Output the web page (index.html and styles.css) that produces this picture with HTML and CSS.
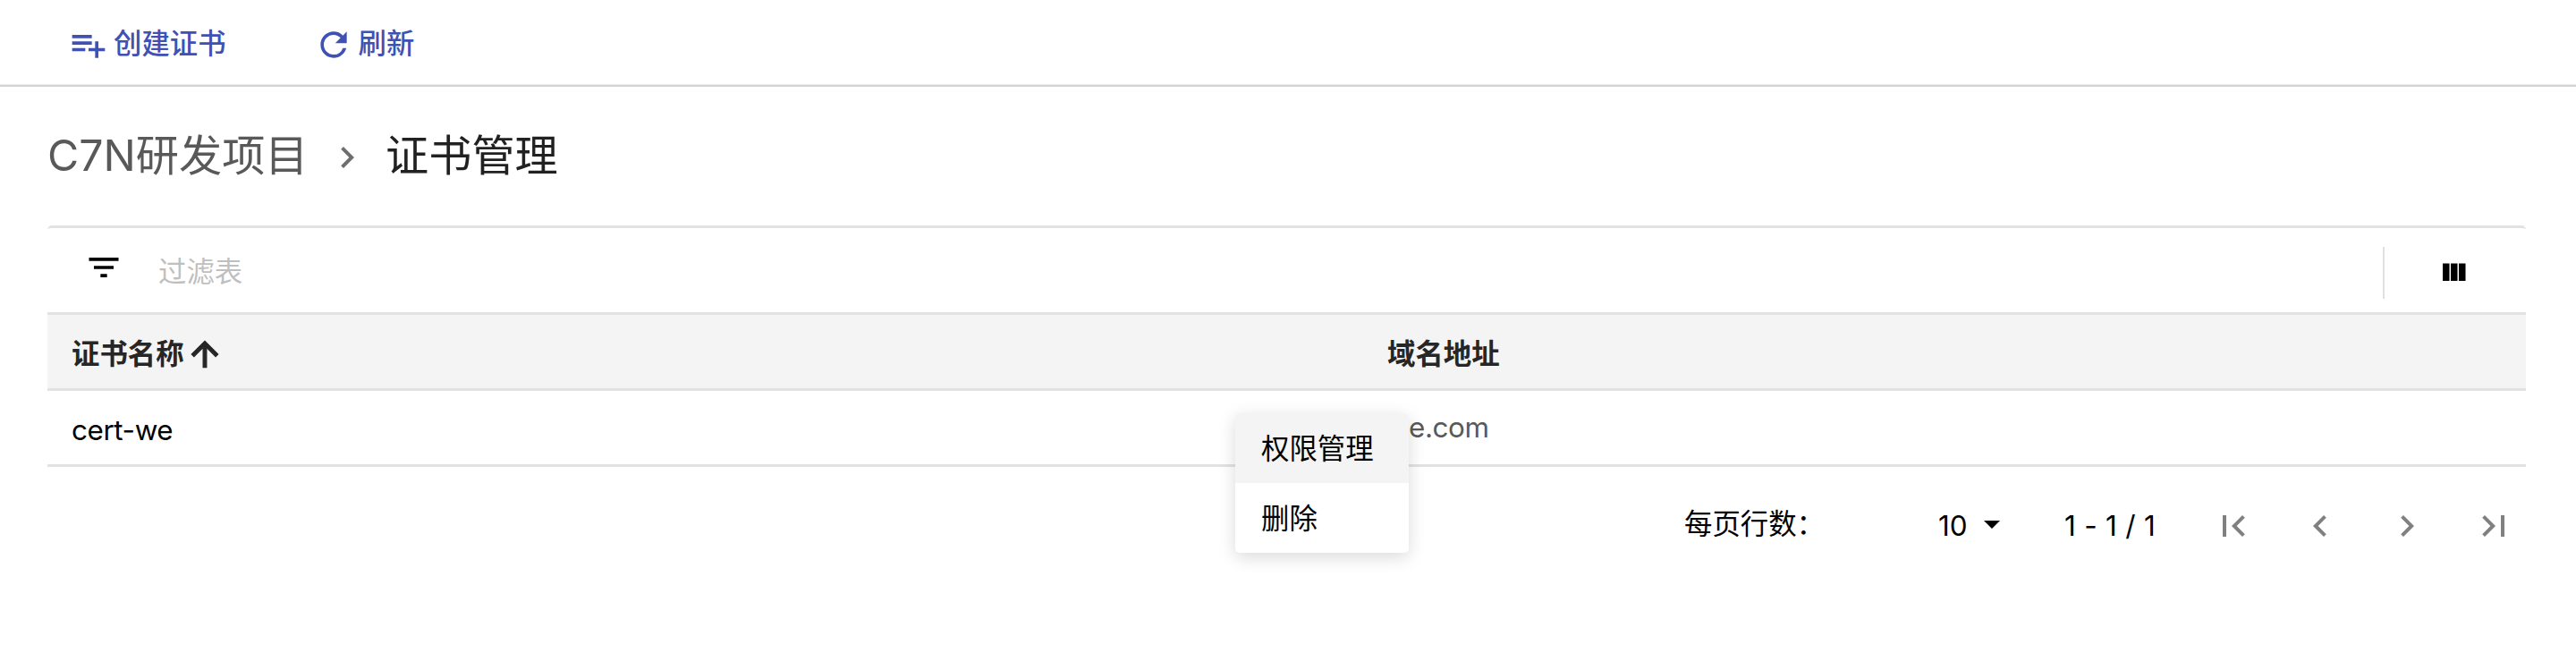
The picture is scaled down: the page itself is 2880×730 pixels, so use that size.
FILE: index.html
```html
<!DOCTYPE html>
<html lang="zh-CN">
<head>
<meta charset="utf-8">
<title>证书管理</title>
<link rel="stylesheet" href="styles.css">
</head>
<body>
<header class="toolbar">
  <button class="action">
    <svg class="icon" viewBox="0 0 24 24"><path d="M14 10H2v2h12v-2zm0-4H2v2h12V6zm4 8v-4h-2v4h-4v2h4v4h2v-4h4v-2h-4zM2 16h8v-2H2v2z"/></svg>
    <span class="action-label">创建证书</span>
  </button>
  <button class="action">
    <svg class="icon" viewBox="0 0 24 24"><path d="M17.65 6.35A7.958 7.958 0 0 0 12 4c-4.42 0-7.99 3.58-7.99 8s3.57 8 7.99 8c3.73 0 6.84-2.55 7.73-6h-2.08A5.99 5.99 0 0 1 12 18c-3.31 0-6-2.69-6-6s2.69-6 6-6c1.66 0 3.14.69 4.22 1.78L13 11h7V4l-2.35 2.35z"/></svg>
    <span class="action-label">刷新</span>
  </button>
</header>
<main class="content">
  <nav class="breadcrumb">
    <span class="crumb">C7N研发项目</span>
    <svg class="crumb-arrow" viewBox="0 0 24 24"><path d="M10 6L8.59 7.41 13.17 12l-4.58 4.59L10 18l6-6z"/></svg>
    <span class="crumb-current">证书管理</span>
  </nav>
  <section class="table">
    <div class="filter">
      <svg class="icon filter-icon" viewBox="0 0 24 24"><path d="M10 18h4v-2h-4v2zM3 6v2h18V6H3zm3 7h12v-2H6v2z"/></svg>
      <span class="placeholder">过滤表</span>
      <span class="columns"><svg class="columns-icon" viewBox="0 0 24 24"><path d="M10 18h5V5h-5v13zm-6 0h5V5H4v13zM16 5v13h5V5h-5z"/></svg></span>
    </div>
    <div class="row head">
      <div class="cell">证书名称<svg class="icon sort" viewBox="0 0 24 24"><path d="M4 12l1.41 1.41L11 7.83V20h2V7.83l5.58 5.59L20 12l-8-8-8 8z"/></svg></div>
      <div class="cell">域名地址</div>
    </div>
    <div class="row">
      <div class="cell name">cert-we</div>
      <div class="cell domain">e.com</div>
    </div>
    <ul class="menu">
      <li class="menu-item active">权限管理</li>
      <li class="menu-item">删除</li>
    </ul>
  </section>
  <footer class="pager">
    <span class="pager-label">每页行数：</span>
    <span class="page-size">10<i class="caret"></i></span>
    <span class="range">1 - 1 / 1</span>
    <div class="pager-nav">
      <svg viewBox="0 0 24 24"><path d="M18.41 16.59L13.82 12l4.59-4.59L17 6l-6 6 6 6zM6 6h2v12H6z"/></svg>
      <svg viewBox="0 0 24 24"><path d="M15.41 7.41L14 6l-6 6 6 6 1.41-1.41L10.83 12z"/></svg>
      <svg viewBox="0 0 24 24"><path d="M10 6L8.59 7.41 13.17 12l-4.58 4.59L10 18l6-6z"/></svg>
      <svg viewBox="0 0 24 24"><path d="M5.59 7.41L10.18 12l-4.59 4.59L7 18l6-6-6-6zM16 6h2v12h-2z"/></svg>
    </div>
  </footer>
</main>
</body>
</html>
```
FILE: styles.css
```css
* { box-sizing: border-box; }
body {
  margin: 0;
  height: 730px;
  background: #fff;
  color: #000;
  font: 31.4px/44px Inter, "Noto Sans CJK SC", sans-serif;
  overflow: hidden;
}
svg { display: block; flex: none; fill: currentColor; }
.icon { width: 44px; height: 44px; }

.toolbar {
  display: flex;
  gap: 98px;
  height: 97px;
  padding: 28px 0 0 77px;
  border-bottom: 2px solid #d3d3d3;
  box-shadow: inset 0 -1px #ececec;
}
.action {
  display: flex;
  gap: 6px;
  height: 44px;
  padding: 0;
  border: 0;
  background: none;
  color: #3f51b5;
  font: inherit;
  font-weight: 500;
}
.action-label { margin-top: -1px; }

.content { padding: 0 56px 0 53px; }
.breadcrumb {
  display: flex;
  align-items: center;
  height: 155px;
  font-size: 48.2px;
  line-height: 70px;
  color: #595959;
}
.crumb { width: 311px; margin-top: -2px; white-space: nowrap; }
.crumb-arrow { width: 48px; height: 48px; margin-top: 3px; color: #6e6e6e; }
.crumb-current { margin: -2px 0 0 19px; color: #212121; }

.table {
  position: relative;
  border-top: 3px solid #e2e2e2;
  border-radius: 5px;
}
.filter {
  display: flex;
  align-items: center;
  height: 97px;
  padding-left: 41px;
  border-bottom: 3px solid #e2e2e2;
}
.filter-icon { margin-top: -6px; }
.placeholder { margin: 4px 0 0 39px; color: #bfbfbf; }
.columns {
  display: flex;
  align-items: center;
  width: 160px;
  height: 58px;
  margin: 5px 0 0 auto;
  padding-left: 59px;
  border-left: 2px solid #e0e0e0;
}
.columns-icon { width: 36px; height: 36px; }

.row {
  display: grid;
  grid-template-columns: 1471px 1fr;
  align-items: center;
  height: 85px;
  border-bottom: 3px solid #e2e2e2;
}
.head {
  background: #f4f4f4;
  color: #262626;
  font-weight: 600;
}
.cell { display: flex; align-items: center; padding: 6px 0 0 27px; }
.sort { margin-left: 1px; stroke: currentColor; stroke-width: 0.7; }
.name, .domain { letter-spacing: -0.4px; }
.domain { padding: 0 0 0 51px; color: #595959; }

.menu {
  position: absolute;
  top: 207px;
  left: 1328px;
  width: 194px;
  margin: 0;
  padding: 0;
  list-style: none;
  background: #fff;
  border-radius: 5px;
  box-shadow: 0 5px 19px rgba(0, 0, 0, 0.15);
  overflow: hidden;
}
.menu-item { height: 78px; padding: 18px 29px 16px; }
.active { background: #f4f4f4; }

.pager {
  display: flex;
  align-items: center;
  height: 131px;
  padding-right: 12px;
}
.pager-label { width: 284px; margin: -4px 0 0 1830px; }
.page-size { display: flex; align-items: center; gap: 18px; width: 141px; }
.caret {
  margin-top: -2px;
  border: 9px solid transparent;
  border-top-color: #000;
  border-bottom: 0;
}
.range { letter-spacing: 0.3px; white-space: nowrap; }
.pager-nav { display: flex; gap: 49px; margin-left: auto; color: #808080; }
.pager-nav svg { width: 48px; height: 48px; }
```
